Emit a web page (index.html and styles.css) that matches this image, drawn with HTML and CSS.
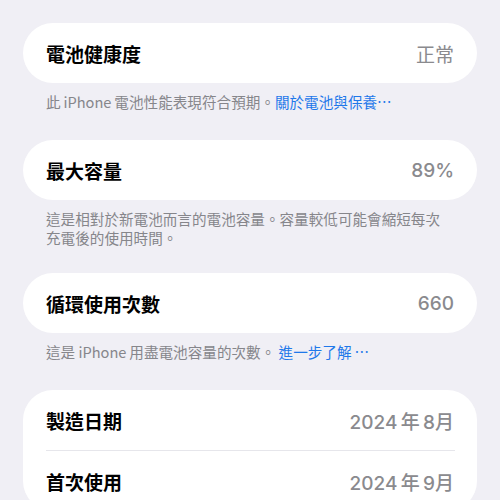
FILE: index.html
```html
<!DOCTYPE html>
<html lang="zh-Hant">
<head>
    <meta charset="UTF-8">
    <meta name="viewport" content="width=device-width, initial-scale=1.0">
    <title>電池健康度</title>
    <link rel="stylesheet" href="styles.css">
</head>
<body>

    <div class="battery-page">
        <div class="card">
            <div class="row">
                <span class="label">電池健康度</span>
                <span class="value">正常</span>
            </div>
        </div>
        <p class="footer">此&thinsp;iPhone&thinsp;電池性能表現符合預期。<a href="#">關於電池與保養⋯</a></p>

        <div class="card">
            <div class="row">
                <span class="label">最大容量</span>
                <span class="value num">89%</span>
            </div>
        </div>
        <p class="footer footer-multi">這是相對於新電池而言的電池容量。容量較低可能會縮短每次充電後的使用時間。</p>

        <div class="card">
            <div class="row">
                <span class="label">循環使用次數</span>
                <span class="value num">660</span>
            </div>
        </div>
        <p class="footer">這是 iPhone&thinsp;用盡電池容量的次數。 <a href="#">進一步了解&thinsp;⋯</a></p>

        <div class="card">
            <div class="row">
                <span class="label">製造日期</span>
                <span class="value num">2024&thinsp;年&thinsp;8月</span>
            </div>
            <div class="divider"></div>
            <div class="row">
                <span class="label">首次使用</span>
                <span class="value num">2024&thinsp;年&thinsp;9月</span>
            </div>
        </div>
    </div>

</body>
</html>
```

FILE: styles.css
```css
body {
    margin: 0;
    background-color: #f0eff5; /* iOS grouped background */
    font-family: Inter, "Noto Sans CJK TC", sans-serif;
    color: #000;
    overflow: hidden;
}

.battery-page {
    padding: 23px 23px 0;
}

.card {
    background-color: #fff;
    border-radius: 30px;
}

.row {
    height: 60px;
    padding: 0 23px;
    display: flex;
    justify-content: space-between;
    align-items: center;
    font-size: 19px;
}

.label {
    font-family: "Noto Sans CJK TC", sans-serif;
    font-weight: 600;
}

.value {
    font-family: "Noto Sans CJK TC", sans-serif;
    color: #8a8a8e;
}

.value.num {
    font-family: Inter, "Noto Sans CJK TC", sans-serif;
    font-weight: 500;
}

.divider {
    height: 1px;
    margin: 0 22px 0 23px;
    background-color: #e6e6eb;
}

.footer {
    margin: 9px 0 29px;
    padding: 0 31px 0 23px;
    font-family: "Noto Sans CJK TC", sans-serif;
    font-size: 14.6px;
    line-height: 19px;
    color: #86868b;
}

.footer-multi {
    margin-bottom: 26px;
}

.footer a {
    color: #1f78ea; /* link blue */
    text-decoration: none;
}
```
